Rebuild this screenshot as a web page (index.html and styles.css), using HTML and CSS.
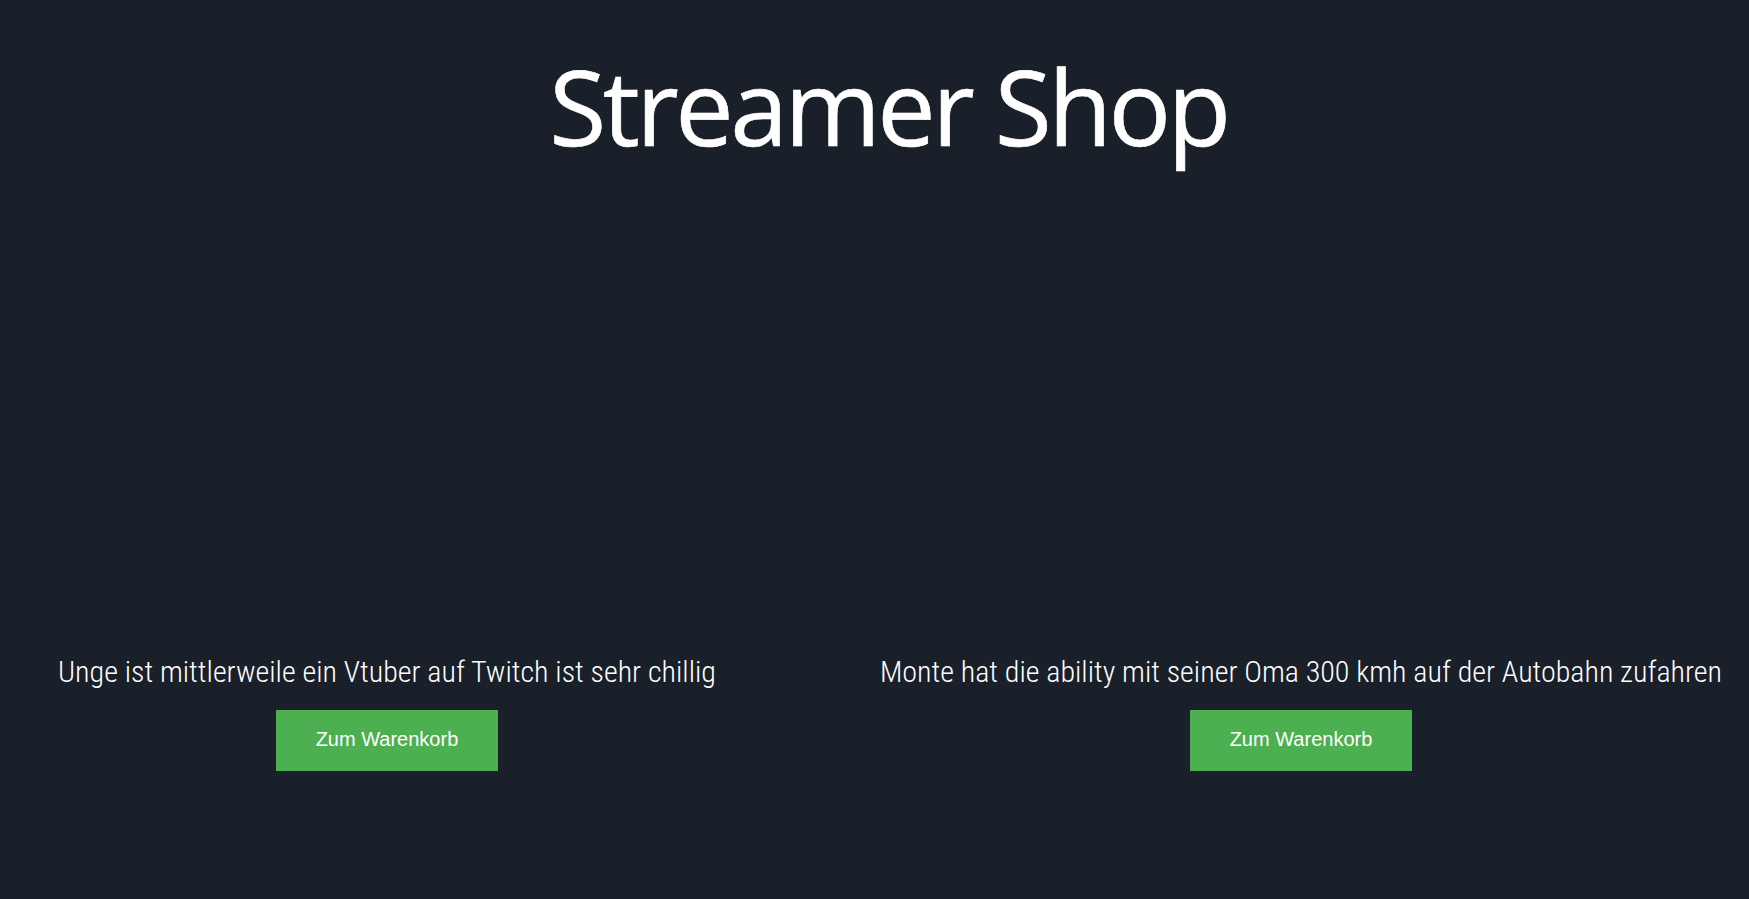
FILE: index.html
```
<!DOCTYPE html>
<html lang="de">
<head>
<meta charset="utf-8">
<title>Streamer Shop</title>
<link rel="stylesheet" href="styles.css">
</head>
<body>
<header class="header">
  <h1 class="title">Streamer Shop</h1>
</header>
<main class="products">
  <div class="product">
    <div class="product-image"></div>
    <p class="product-text">Unge ist mittlerweile ein Vtuber auf Twitch ist sehr chillig</p>
    <button class="cart-btn">Zum Warenkorb</button>
  </div>
  <div class="product">
    <div class="product-image"></div>
    <p class="product-text">Monte hat die ability mit seiner Oma 300 kmh auf der Autobahn zufahren</p>
    <button class="cart-btn">Zum Warenkorb</button>
  </div>
</main>
</body>
</html>
```
FILE: styles.css
```
html, body {
  margin: 0;
  padding: 0;
}

body {
  background: #1a202a;
  color: #ffffff;
  min-height: 899px;
}

.header {
  display: flex;
  justify-content: center;
  padding-top: 35px;
  padding-left: 28px;
}

.title {
  margin: 0;
  font-family: "Open Sans", "Noto Sans", sans-serif;
  font-weight: 400;
  font-size: 104px;
  letter-spacing: -3.5px;
  line-height: normal;
  -webkit-text-stroke: 0.6px #ffffff;
}

.products {
  display: flex;
  gap: 164px;
  padding-left: 58px;
  margin-top: 478px;
}

.product {
  display: flex;
  flex-direction: column;
  align-items: center;
}

.product-image {
  height: 0;
}

.product-text {
  margin: 0;
  font-family: "Roboto Condensed", "Liberation Sans Narrow", sans-serif;
  font-weight: 300;
  font-size: 30px;
  line-height: 35px;
  white-space: nowrap;
}

.cart-btn {
  margin-top: 21px;
  background: #4caf50;
  color: #ffffff;
  border: none;
  border-radius: 0;
  font-family: "Liberation Sans", Arial, sans-serif;
  font-size: 20px;
  line-height: 23px;
  padding: 18px 40px 20px;
  cursor: pointer;
}
```
